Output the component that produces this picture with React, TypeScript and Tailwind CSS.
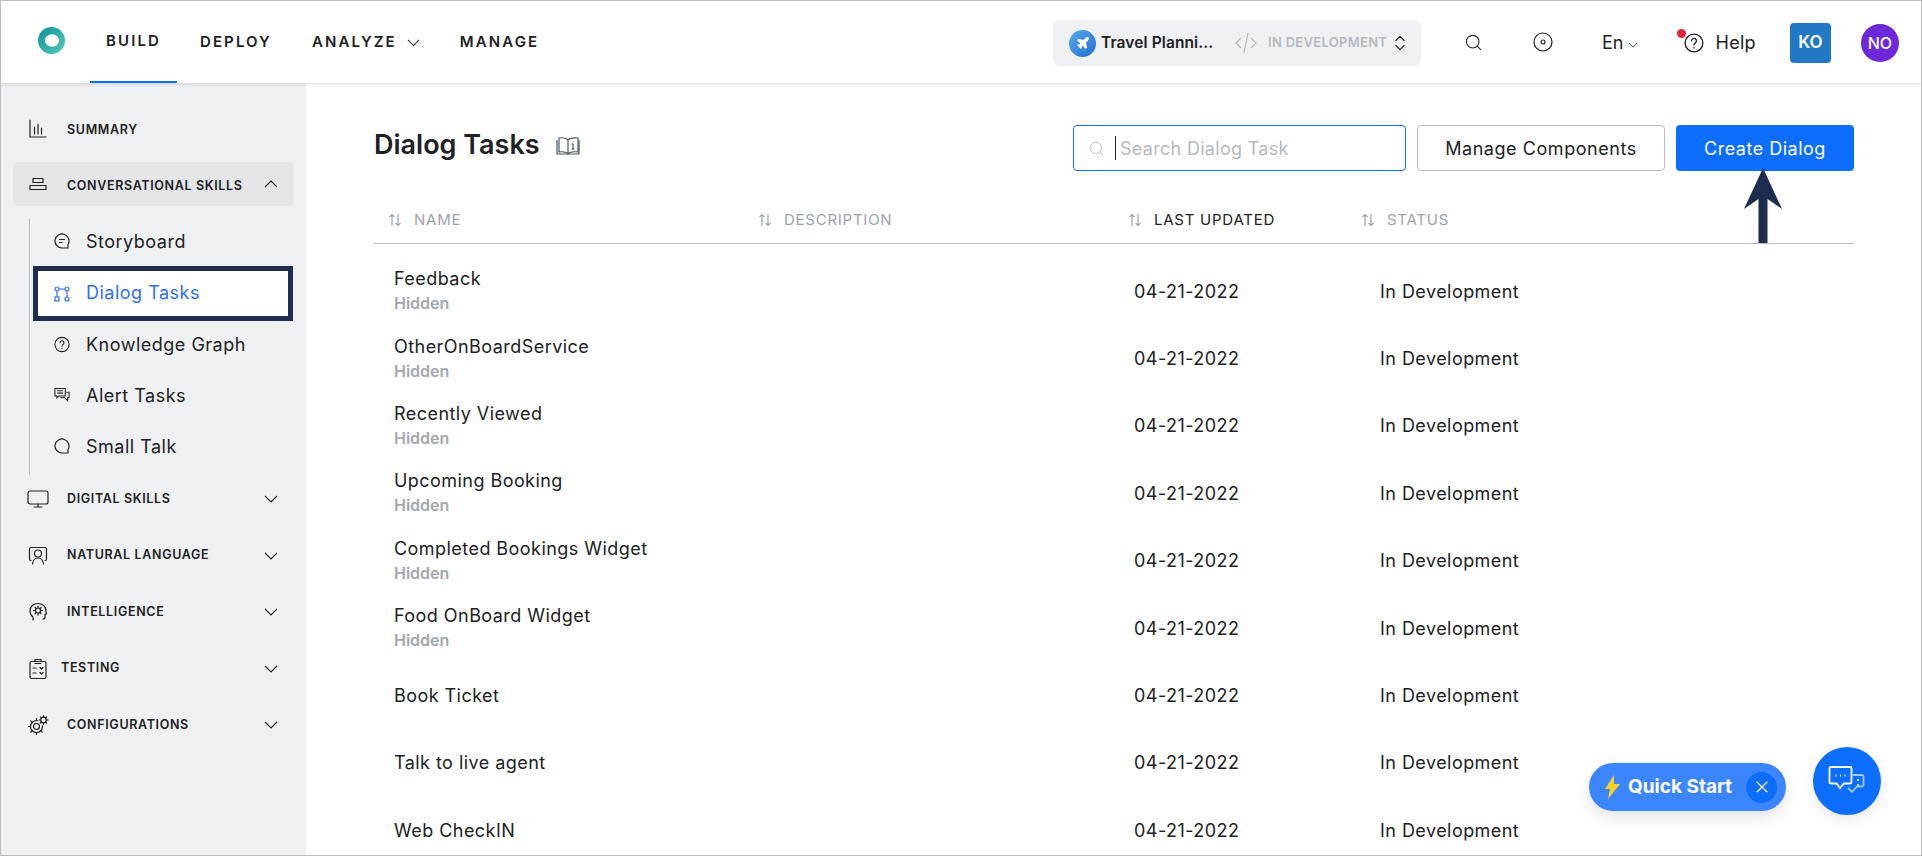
import { ChevronsUpDown, Plane, Search, X } from "lucide-react";
import React from "react";

const ink = "#202124";

const Caret = ({ w = 14, up = false, className = "" }: { w?: number; up?: boolean; className?: string }) => (
	<svg width={w} height={w / 2 + 1} viewBox="0 0 14 8" fill="none" stroke={ink} strokeWidth="1.1" className={`${up ? "rotate-180" : ""} ${className}`}>
		<path d="M1 1l6 6 6-6" />
	</svg>
);

const SortIcon = () => (
	<svg width="16" height="14" viewBox="0 0 16 14" fill="none" stroke="#9ca3af" strokeWidth="1.2" className="ml-[-1px]">
		<path d="M5 13V1.5M2.5 4L5 1.5 7.5 4M11 1v11.5M8.5 10l2.5 2.5 2.5-2.5" />
	</svg>
);

const Svg = ({ children, w = 20, h = 20 }: { children: React.ReactNode; w?: number; h?: number }) => (
	<svg width={w} height={h} viewBox={`0 0 ${w} ${h}`} fill="none" stroke={ink} strokeWidth="1.2" strokeLinecap="round" strokeLinejoin="round">
		{children}
	</svg>
);

const SummaryIcon = () => (
	<Svg>
		<path d="M2 1v17h16M6.500 8v7M10 5v10M13.500 9v6" />
	</Svg>
);
const ConversationIcon = () => (
	<Svg h={16}>
		<path d="M5 2.500h10v4H5zM2 9.500h16v4H2z" />
	</Svg>
);
const MonitorIcon = () => (
	<Svg w={22} h={18}>
		<rect x="1" y="1" width="20" height="13" rx="2" />
		<path d="M7 17h8M11 14v3" />
	</Svg>
);
const LanguageIcon = () => (
	<Svg>
		<path d="M3 14.500c-1 0-1.500-.5-1.500-1.500V3c0-1 .5-1.500 1.500-1.500h14c1 0 1.500.5 1.500 1.500v10c0 1-.5 1.500-1.500 1.500" />
		<circle cx="10" cy="7.500" r="3.500" />
		<path d="M4.500 18c.5-3.500 2.500-6 5.500-6s5 2.500 5.500 6" />
	</Svg>
);
const IntelligenceIcon = () => (
	<Svg>
		<path d="M5 18v-3c-2-1.500-3-3.500-3-6 0-4.500 3.500-7.500 8-7.500s8 3 8 7.500c0 1 .5 2 .5 3H17v3c0 1-.5 2-2 2" />
		<circle cx="10" cy="8.500" r="2.500" />
		<path d="M10 4v1.500M10 11.500V13M5.500 8.500H7M13 8.500h1.500M7 5.500l1 1M12 10.500l1 1M13 5.500l-1 1M8 10.500l-1 1" />
	</Svg>
);
const TestingIcon = () => (
	<Svg w={18} h={22}>
		<rect x="1" y="3.500" width="16" height="17" rx="1.500" />
		<path d="M6 3.500V1.500h6v2M6 5.500h6M4 10h3M4 15h3M11 9.500l1.500 1.500L14 9.500M11 14.500l1.500 1.500 1.500-1.500" />
	</Svg>
);
const ConfigIcon = () => (
	<Svg w={22} h={22}>
		<circle cx="9.500" cy="12.500" r="6" />
		<circle cx="9.500" cy="12.500" r="3" />
		<path d="M9.500 4.500v2M9.500 18.500v2M1.500 12.500h2M3.800 6.800l1.500 1.500M13.700 16.700l1.500 1.500M3.800 18.200l1.500-1.500" />
		<circle cx="16.500" cy="6" r="5.500" fill="#eff0f1" stroke="none" />
		<circle cx="16.500" cy="6" r="2.800" />
		<path d="M16.500 1.500v1.700M16.500 8.800v1.700M12 6h1.700M19.300 6H21M13.300 2.800l1.200 1.200M18.500 8l1.200 1.200M19.700 2.800L18.500 4M14.500 8l-1.200 1.200" />
	</Svg>
);
const StoryIcon = () => (
	<svg width="16" height="16" viewBox="0 0 16 16" fill="none" stroke={ink} strokeWidth="1.200" strokeLinecap="round">
		<path d="M8 15A7 7 0 1 1 14 11.600V15H8" />
		<path d="M5.500 6.500h5M5.500 9.500h2.500" />
	</svg>
);
const FlowIcon = () => (
	<svg width="16" height="16" viewBox="0 0 16 16" fill="none" stroke="#2f6fed" strokeWidth="1.200">
		<circle cx="3" cy="3" r="2" />
		<circle cx="13" cy="3" r="2" />
		<circle cx="13" cy="13" r="2" />
		<rect x="1" y="11" width="4" height="4" />
		<path d="M5 3h6M3 5v6M13 5v6" />
	</svg>
);
const HelpCircle = ({ size = 17 }: { size?: number }) => (
	<svg width={size} height={size} viewBox="0 0 18 18" fill="none" stroke={ink} strokeWidth="1.200" strokeLinecap="round">
		<circle cx="9" cy="9" r="8" />
		<path d="M6.800 7a2.200 2.200 0 1 1 3.400 1.900c-.8.500-1.200 1-1.200 2" />
		<path d="M9 13.300v.2" />
	</svg>
);
const AlertIcon = () => (
	<svg width="17" height="16" viewBox="0 0 17 16" fill="none" stroke={ink} strokeWidth="1.100">
		<path d="M1 1h11v8H5L3 11V9H1z" />
		<path d="M3.500 3.500h6M3.500 6h6M13 5h3v6h-1.500v3l-3-3H7" />
	</svg>
);
const TalkIcon = () => (
	<svg width="16" height="16" viewBox="0 0 16 16" fill="none" stroke={ink} strokeWidth="1.200" strokeLinecap="round">
		<path d="M8 15A7 7 0 1 1 14 11.600V15H8" />
	</svg>
);
const BookIcon = () => (
	<svg width="25" height="20" viewBox="0 0 25 20" fill="none" stroke="#4b5563" strokeWidth="1.200">
		<path d="M12 4C10 2 6 1.500 3 2v14c3-.5 7 0 9 1.500 2-1.500 6-2 10-1.500V2c-4-.5-8 0-10 2zM12 4v13" />
		<path d="M1 4v14h22V4" />
		<path d="M17 5.500v.5M15.500 8H17v5M15.500 13h3" />
	</svg>
);

const Logo = () => (
	<svg width="27" height="27" viewBox="0 0 27 27">
		<defs>
			<linearGradient id="logo" x1="0" y1="0" x2="1" y2="1">
				<stop offset="0" stopColor="#0b8f98" />
				<stop offset="1" stopColor="#56cdbb" />
			</linearGradient>
		</defs>
		<ellipse cx="13.500" cy="13.500" rx="13.500" ry="13.500" fill="url(#logo)" />
		<ellipse cx="14" cy="13.500" rx="7" ry="6.200" fill="#fff" />
	</svg>
);

const Bolt = () => (
	<svg width="15" height="24" viewBox="0 0 15 24" fill="#fbd026">
		<path d="M9 0L0 14h5L3 24 15 9H9z" />
	</svg>
);

const ChatIcon = () => (
	<svg width="38" height="32" viewBox="0 0 38 32" fill="none" strokeWidth="1.800">
		<path d="M25 10h9c1 0 1.500.5 1.500 1.500V20c0 1-.5 1.500-1.500 1.500h-5L24 27l-4-4" stroke="#9ec5ff" />
		<circle cx="30" cy="15" r="1" fill="#fff" />
		<circle cx="30" cy="20" r="1" fill="#fff" />
		<path d="M3 2h19c1 0 1.500.5 1.500 1.500V17c0 1-.5 1.500-1.500 1.500h-6L12 23l-3.500-4.500H3c-1 0-1.500-.5-1.500-1.500V3.500C1.500 2.500 2 2 3 2z" stroke="#fff" />
		<path d="M7.500 10.500h1M12 10.500h1M16.500 10.500h1" stroke="#fff" strokeWidth="2" />
	</svg>
);

const groups = [
	{ label: "DIGITAL SKILLS", icon: <MonitorIcon />, gap: "mr-[16px]" },
	{ label: "NATURAL LANGUAGE", icon: <LanguageIcon />, gap: "mr-[16px]" },
	{ label: "INTELLIGENCE", icon: <IntelligenceIcon />, gap: "mr-[16px]" },
	{ label: "TESTING", icon: <TestingIcon />, gap: "mr-[11px]" },
	{ label: "CONFIGURATIONS", icon: <ConfigIcon />, gap: "mr-[16px]" },
];

const rows = [
	{ name: "Feedback", hidden: true },
	{ name: "OtherOnBoardService", hidden: true },
	{ name: "Recently Viewed", hidden: true },
	{ name: "Upcoming Booking", hidden: true },
	{ name: "Completed Bookings Widget", hidden: true },
	{ name: "Food OnBoard Widget", hidden: true },
	{ name: "Book Ticket", hidden: false },
	{ name: "Talk to live agent", hidden: false },
	{ name: "Web CheckIN", hidden: false },
];

const columns = [
	{ label: "NAME", active: false },
	{ label: "DESCRIPTION", active: false },
	{ label: "LAST UPDATED", active: true },
	{ label: "STATUS", active: false },
];

const navLabel = "text-[15px] font-semibold tracking-[2.1px]";
const sideLabel = "text-[12.5px] font-semibold tracking-[0.65px]";
const subLabel = "text-[18px] tracking-[0.5px]";
const cellText = "text-[18px] tracking-[0.45px]";

const App = () => {
	return (
		<div
			className="relative w-[1922px] h-[856px] overflow-hidden border border-[#bdbdbd] bg-white flex flex-col text-[#202124]"
			style={{ fontFamily: "Inter, sans-serif" }}
		>
			<header className="relative z-10 h-[82px] shrink-0 flex items-center bg-white shadow-[0_1px_4px_rgba(0,0,0,0.14)]">
				<div className="ml-[37px] mt-[-4px]">
					<Logo />
				</div>
				<nav className="flex h-full ml-[25px]">
					<a className={`${navLabel} w-[87px] flex items-center justify-center border-b-2 border-[#0d6efd]`}>BUILD</a>
					<a className={`${navLabel} ml-[23px] flex items-center`}>DEPLOY</a>
					<a className={`${navLabel} ml-[40px] flex items-center`}>
						ANALYZE
						<Caret w={13} className="ml-[10px] mt-[2px]" />
					</a>
					<a className={`${navLabel} ml-[40px] flex items-center`}>MANAGE</a>
				</nav>
				<div className="ml-auto mt-[2px] w-[368px] h-[46px] rounded-md bg-[#eff0f1] flex items-center pl-[16px]">
					<span className="w-[27px] h-[27px] rounded-full bg-gradient-to-br from-[#5aa9ee] to-[#1e6fd0] flex items-center justify-center">
						<Plane size={14} color="#fff" fill="#fff" />
					</span>
					<span className="ml-[5px] w-[134px] text-[15.5px] font-semibold tracking-[0.1px]">Travel Planni...</span>
					<svg width="22" height="26" viewBox="0 0 22 26" fill="none" stroke="#b5b9bf" strokeWidth="1.200">
						<path d="M6 8l-5 5 5 5M16 8l5 5-5 5M13 3L9 23" />
					</svg>
					<span className="ml-[11px] w-[124px] text-[13px] font-semibold tracking-[0.3px] text-[#b5b9bf]">IN DEVELOPMENT</span>
					<ChevronsUpDown size={20} strokeWidth={1.300} className="ml-[-2px]" />
				</div>
				<div className="w-[500px] shrink-0 relative h-full flex items-center">
					<Search size={19} strokeWidth={1.300} className="ml-[43px]" />
					<svg width="20" height="20" viewBox="0 0 20 20" fill="none" stroke={ink} strokeWidth="1.200" className="ml-[50px]">
						<circle cx="10" cy="10" r="9" />
						<circle cx="10" cy="10" r="2" />
					</svg>
					<span className="ml-[49px] text-[18px] mt-[1px]">En</span>
					<Caret w={10} className="ml-[5px] mt-[5px]" />
					<span className="relative ml-[46px] mr-[11px] flex mt-[1px]">
						<HelpCircle size={20} />
						<span className="absolute left-[-7px] top-[-4px] w-[9px] h-[9px] rounded-full bg-[#e0263c]" />
					</span>
					<span className="text-[18px] tracking-[0.3px] mt-[1px]">Help</span>
					<span className="ml-[34px] mt-[2px] w-[41px] h-[40px] rounded-sm bg-[#2179c4] text-white text-[17px] font-semibold flex items-center justify-center">KO</span>
					<span className="ml-[30px] mt-[2px] w-[38px] h-[38px] rounded-full bg-[#6d28d9] text-white text-[16px] font-medium flex items-center justify-center">NO</span>
				</div>
			</header>

			<div className="flex flex-1 min-h-0">
				<aside className="w-[305px] shrink-0 bg-[#eff0f1] px-[12px] pt-[24px]">
					<div className="h-[44px] flex items-center pl-[12px] pr-[16px]">
						<span className="w-[26px] mr-[16px] flex justify-center"><SummaryIcon /></span>
						<span className={`${sideLabel} pt-[2px]`}>SUMMARY</span>
					</div>
					<div className="mt-[11px] h-[44px] flex items-center pl-[12px] pr-[16px] rounded-md bg-[#e4e5e7]">
						<span className="w-[26px] mr-[16px] flex justify-center"><ConversationIcon /></span>
						<span className={`${sideLabel} pt-[4px]`}>CONVERSATIONAL SKILLS</span>
						<Caret up className="ml-auto" />
					</div>
					<div className="mt-[13px] ml-[16px] h-[256px] border-l border-[#bdbdbd] pl-[3px] flex flex-col">
						<div className="h-[44px] mb-[3px] flex items-center pl-[21px]">
							<span className="w-[16px] mr-[16px] flex"><StoryIcon /></span>
							<span className={`${subLabel} pt-[1px]`}>Storyboard</span>
						</div>
						<div className="w-[260px] h-[55px] shrink-0 border-[5px] border-[#1e2d4f] bg-white flex items-center pl-[16px]">
							<span className="w-[16px] mr-[16px] flex"><FlowIcon /></span>
							<span className={`${subLabel} pb-[2px] text-[#2f6fed]`}>Dialog Tasks</span>
						</div>
						<div className="h-[46px] mb-[5px] flex items-center pl-[21px]">
							<span className="w-[16px] mr-[16px] flex"><HelpCircle /></span>
							<span className={`${subLabel} pt-[1px]`}>Knowledge Graph</span>
						</div>
						<div className="h-[46px] mb-[5px] flex items-center pl-[21px]">
							<span className="w-[16px] mr-[16px] flex"><AlertIcon /></span>
							<span className={`${subLabel} pt-[1px]`}>Alert Tasks</span>
						</div>
						<div className="h-[46px] flex items-center pl-[21px]">
							<span className="w-[16px] mr-[16px] flex"><TalkIcon /></span>
							<span className={`${subLabel} pt-[1px]`}>Small Talk</span>
						</div>
					</div>
					<div className="mt-[2px] flex flex-col gap-[12.500px]">
						{groups.map((g) => (
							<div key={g.label} className="h-[44px] flex items-center pl-[12px] pr-[16px]">
								<span className={`${g.gap} flex justify-center ${g.label === "TESTING" ? "w-[25px]" : "w-[26px]"}`}>{g.icon}</span>
								<span className={sideLabel}>{g.label}</span>
								<Caret className="ml-auto" />
							</div>
						))}
					</div>
				</aside>

				<main className="flex-1 min-w-0 pl-[68px] pr-[67px] pt-[42px]">
					<div className="h-[46px] flex items-center">
						<h1 className="text-[27px] font-semibold mt-[-6px]">Dialog Tasks</h1>
						<span className="ml-[16px] flex mt-[-4px]"><BookIcon /></span>
						<div className="ml-auto flex gap-[11px]">
							<div className="w-[333px] h-[46px] rounded border border-[#0d6efd] flex items-center pl-[14px]">
								<Search size={17} strokeWidth={1.300} color="#b5b9bf" />
								<span className="ml-[10px] w-px h-[24px] bg-[#202124]" />
								<span className="ml-[4px] text-[18px] tracking-[0.3px] text-[#b5b9bf]">Search Dialog Task</span>
							</div>
							<button className="w-[248px] h-[46px] rounded border border-[#bdbdbd] text-[18px] tracking-[0.55px]">Manage Components</button>
							<button className="w-[178px] h-[46px] rounded bg-[#0d6efd] text-white text-[18px] tracking-[0.5px]">Create Dialog</button>
						</div>
					</div>

					<div className="mt-[24px] h-[49px] pl-[14px] pt-[2px] grid grid-cols-[370px_370px_233px_1fr] items-center border-b border-[#bdbdbd]">
						{columns.map((c) => (
							<div key={c.label} className="flex items-center">
								<SortIcon />
								<span className={`ml-[11px] text-[15px] tracking-[0.75px] ${c.active ? "text-[#202124]" : "text-[#9ca3af]"}`}>{c.label}</span>
							</div>
						))}
					</div>

					<div className="mt-[13.500px]">
						{rows.map((r) => (
							<div key={r.name} className="h-[67.400px] pl-[14px] grid grid-cols-[370px_370px_233px_1fr] items-center">
								<div className="pl-[6px]">
									<div className={`${cellText} leading-[25px]`}>{r.name}</div>
									{r.hidden && <div className="text-[16px] leading-[25px] font-semibold text-[#a3a7ae]">Hidden</div>}
								</div>
								<div />
								<div className={`pl-[6px] ${cellText} tracking-[0.6px]`}>04-21-2022</div>
								<div className={`pl-[19px] ${cellText}`}>In Development</div>
							</div>
						))}
					</div>
				</main>
			</div>

			{/* pointer over the Create Dialog button */}
			<svg width="40" height="75" viewBox="0 0 40 75" fill="#1e2d4f" className="absolute left-[1742px] top-[167px]">
				<path d="M20 0L39 41 24.500 31V75H15.500V31L1 41z" />
			</svg>

			<div className="absolute left-[1588px] top-[762px] w-[197px] h-[48px] rounded-full bg-[#3b86ff] shadow-[0_6px_16px_rgba(0,0,0,0.12)] flex items-center pl-[16px] text-white">
				<Bolt />
				<span className="ml-[8px] text-[19px] font-bold">Quick Start</span>
				<span className="ml-auto mr-[9px] w-[31px] h-[31px] rounded-full bg-[#0d6efd] flex items-center justify-center">
					<X size={20} strokeWidth={1.400} />
				</span>
			</div>
			<div className="absolute left-[1812px] top-[746px] w-[68px] h-[68px] rounded-full bg-[#0d6efd] shadow-[0_4px_14px_rgba(0,0,0,0.1)] flex items-center justify-center">
				<ChatIcon />
			</div>
		</div>
	);
};

export default App;
